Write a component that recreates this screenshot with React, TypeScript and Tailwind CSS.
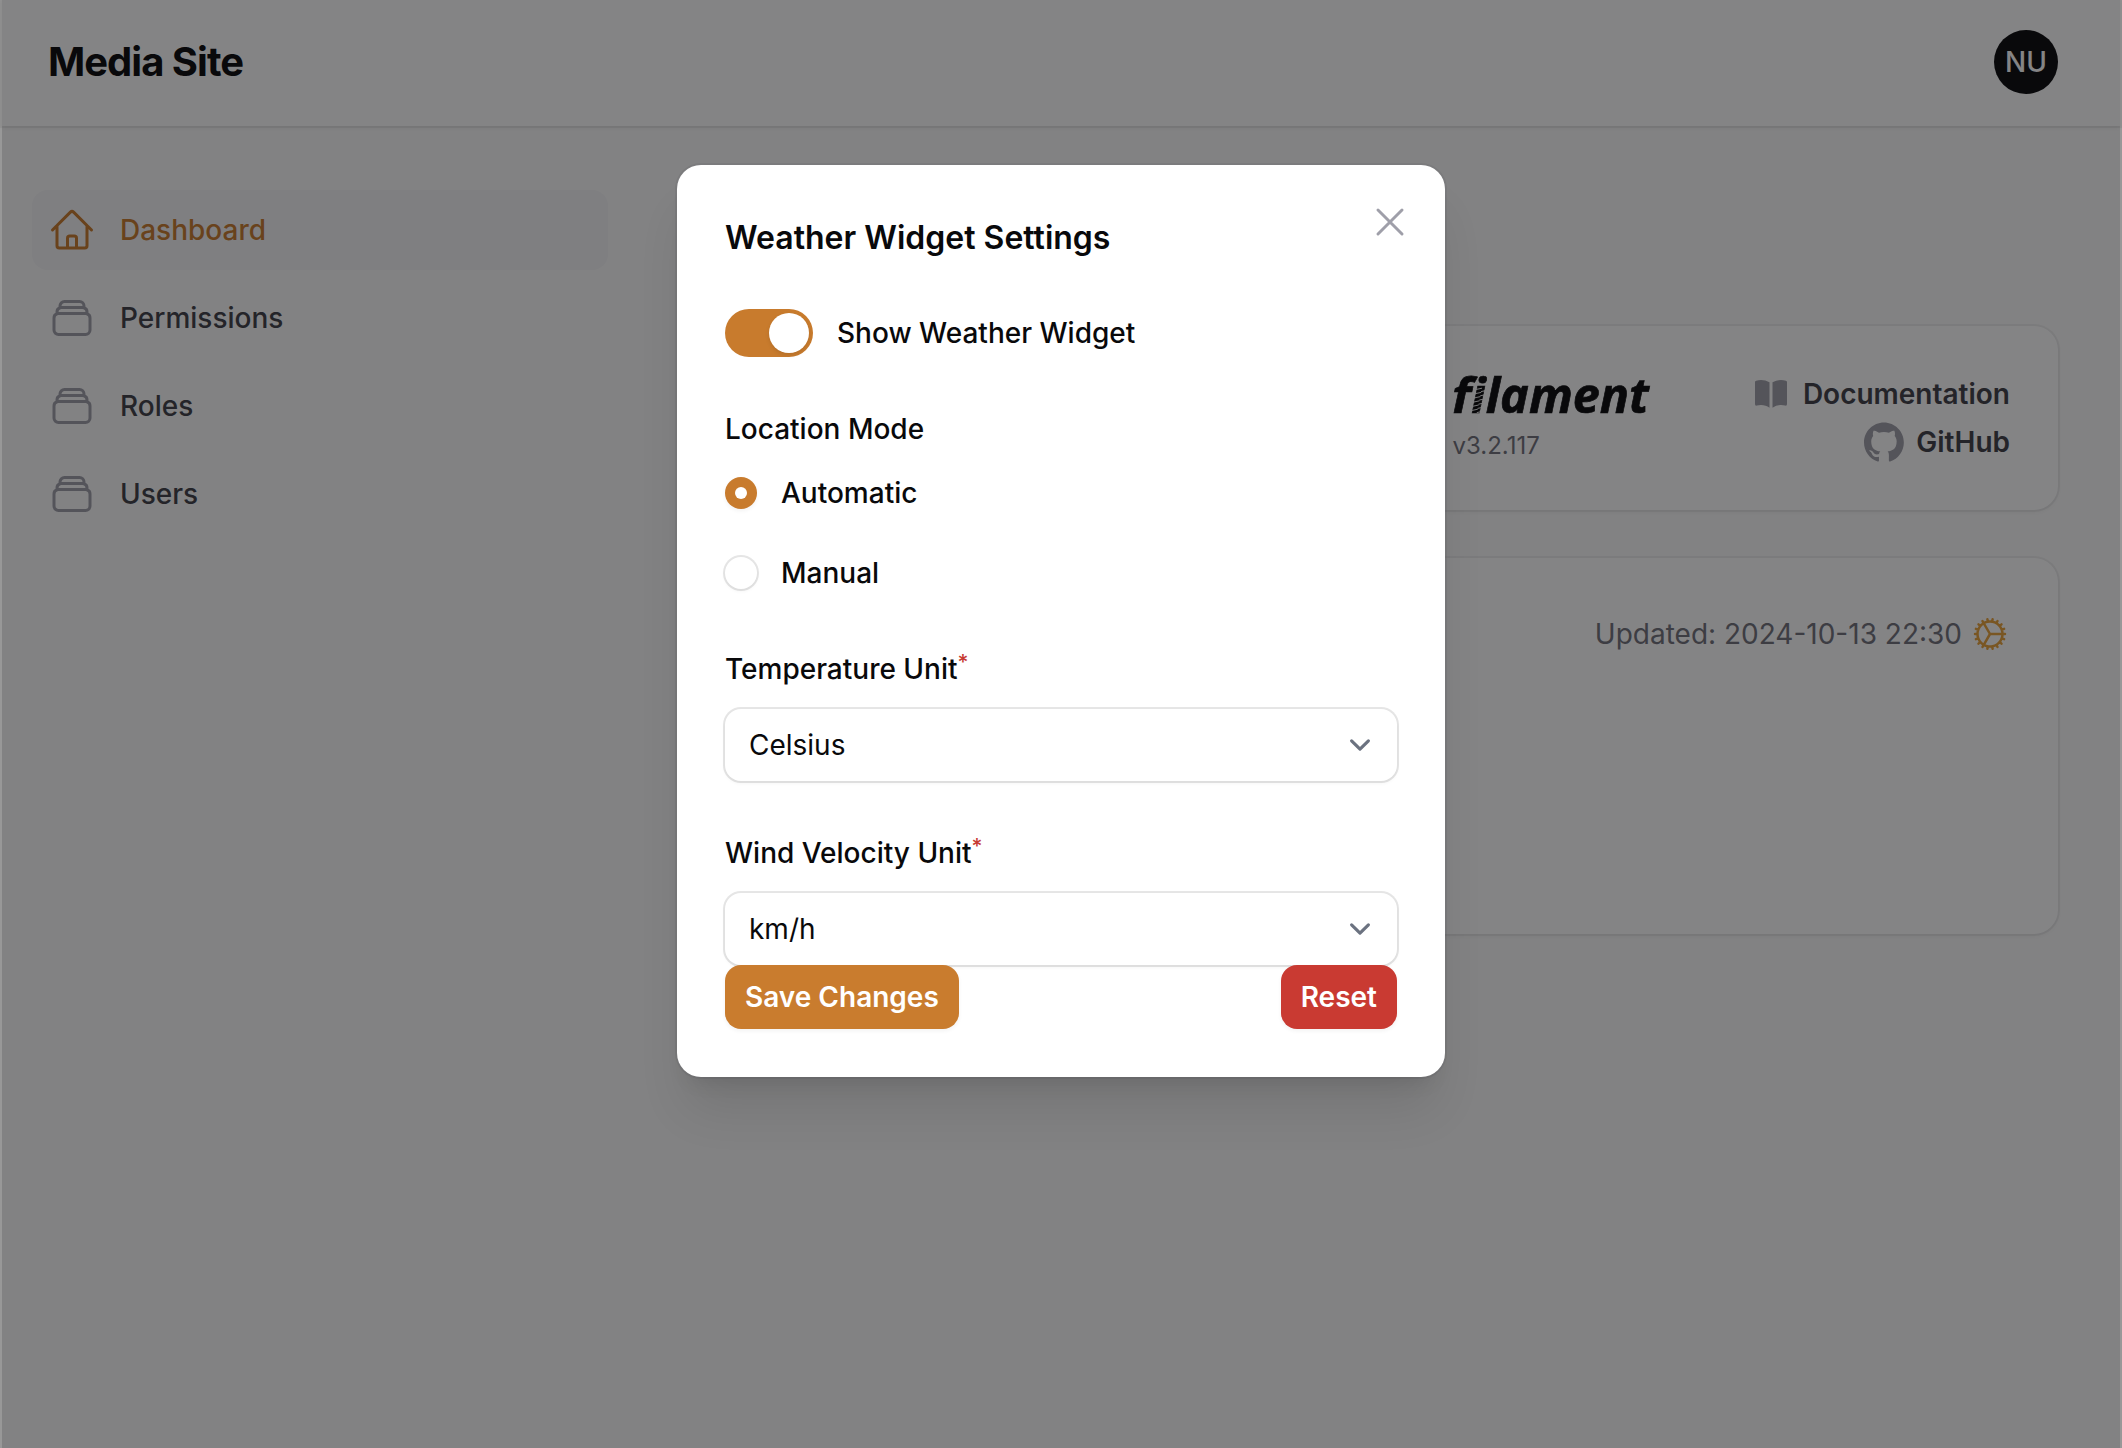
import {
  HiMiniBookOpen,
  HiOutlineCog,
  HiOutlineHome,
  HiOutlineRectangleStack,
  HiOutlineXMark,
} from "react-icons/hi2";

const navItems = [
  { label: "Dashboard", icon: HiOutlineHome, active: true },
  { label: "Permissions", icon: HiOutlineRectangleStack, active: false },
  { label: "Roles", icon: HiOutlineRectangleStack, active: false },
  { label: "Users", icon: HiOutlineRectangleStack, active: false },
];

function Header() {
  return (
    <header className="flex h-[126px] shrink-0 items-center justify-between bg-white pr-[62px] pb-0.5 pl-[46px] shadow-[0_0_0_2px_rgba(9,9,11,0.06),0_2px_4px_rgba(0,0,0,0.05)]">
      <div className="text-[40px] leading-10 font-bold tracking-tight text-zinc-950">Media Site</div>
      <div className="flex size-16 items-center justify-center rounded-full bg-zinc-950 text-[28px] font-medium text-white">
        NU
      </div>
    </header>
  );
}

function Sidebar() {
  return (
    <nav className="flex w-[640px] shrink-0 flex-col gap-2 pt-16 pr-[34px] pl-[30px]">
      {navItems.map(({ label, icon: Icon, active }) => (
        <a
          key={label}
          className={
            active
              ? "flex h-20 items-center gap-6 rounded-2xl bg-[#f4f4f6] px-4 text-[#c87b2d]"
              : "flex h-20 items-center gap-6 rounded-2xl px-4 text-zinc-700"
          }
        >
          <Icon className={active ? "size-12" : "size-12 text-zinc-400"} />
          <span className="text-[28px] leading-10 font-medium">{label}</span>
        </a>
      ))}
    </nav>
  );
}

// Notches cut alternately into both sides of the "i" stem, turning it into a coil.
const coilCuts = [0, 1, 2, 3, 4, 5]
  .map((k) => {
    const y = 14.4 + k * 4.2;
    const left = 1.15 + (5.2 * (38.6 - y)) / 25.7;
    return `M${left - 1.5} ${y + 1.2}L${left + 5} ${y - 0.2}M${left + 10.5} ${y + 1.8}L${left + 4} ${y + 3.2}`;
  })
  .join("");

function Wordmark() {
  return (
    <div className="-ml-px h-10 font-['Open_Sans'] text-[48.5px] leading-10 font-bold whitespace-nowrap text-zinc-950 italic [-webkit-text-stroke:0.7px_#09090b]">
      <span className="inline-block -skew-x-12 not-italic">f</span>
      <span className="relative inline-block leading-10">
        i
        <svg
          className="absolute top-0 left-0 h-10 w-[18px] overflow-visible"
          viewBox="0 0 18 40"
          fill="none"
        >
          <path d={coilCuts} stroke="#ffffff" strokeWidth="0.9" />
        </svg>
      </span>
      lament
    </div>
  );
}

function GitHubMark() {
  return (
    <svg viewBox="0 0 98 96" className="size-10 text-zinc-400" fill="currentColor">
      <path
        fillRule="evenodd"
        clipRule="evenodd"
        d="M48.854 0C21.839 0 0 22 0 49.217c0 21.756 13.993 40.172 33.405 46.69 2.427.49 3.316-1.059 3.316-2.362 0-1.141-.08-5.052-.08-9.127-13.59 2.934-16.42-5.867-16.42-5.867-2.184-5.704-5.42-7.17-5.42-7.17-4.448-3.015.324-3.015.324-3.015 4.934.326 7.523 5.052 7.523 5.052 4.367 7.496 11.404 5.378 14.235 4.074.404-3.178 1.699-5.378 3.074-6.6-10.839-1.141-22.243-5.378-22.243-24.283 0-5.378 1.94-9.778 5.014-13.2-.485-1.222-2.184-6.275.486-13.038 0 0 4.125-1.304 13.426 5.052a46.97 46.97 0 0 1 12.214-1.63c4.125 0 8.33.571 12.213 1.63 9.302-6.356 13.427-5.052 13.427-5.052 2.67 6.763.97 11.816.485 13.038 3.155 3.422 5.015 7.822 5.015 13.2 0 18.905-11.404 23.06-22.324 24.283 1.78 1.548 3.316 4.481 3.316 9.126 0 6.6-.08 11.897-.08 13.526 0 1.304.89 2.853 3.316 2.364 19.412-6.52 33.405-24.935 33.405-46.691C97.707 22 75.788 0 48.854 0z"
      />
    </svg>
  );
}

const cardClass =
  "rounded-3xl bg-white shadow-[0_0_0_2px_rgba(9,9,11,0.05),0_2px_4px_rgba(0,0,0,0.05)]";

function Dashboard() {
  return (
    <main className="flex flex-1 flex-col gap-12 pt-[200px] pr-[62px] pl-[63px]">
      <div className="grid grid-cols-2 gap-12">
        <section className={cardClass} />
        <section className={cardClass}>
          <div className="flex h-[184px] items-center justify-between px-12">
            <div className="flex flex-col gap-4">
              <Wordmark />
              <span className="-ml-px text-2xl leading-8 text-zinc-500">v3.2.117</span>
            </div>
            <div className="flex flex-col items-end gap-2 text-[28px] leading-10 font-semibold text-zinc-700">
              <a className="flex items-center gap-3">
                <HiMiniBookOpen className="size-10 text-zinc-400" />
                Documentation
              </a>
              <a className="flex items-center gap-3">
                <GitHubMark />
                GitHub
              </a>
            </div>
          </div>
        </section>
      </div>
      <section className={cardClass}>
        <div className="flex h-[376px] items-start justify-end gap-2 px-12 pt-14 text-[28px] leading-10 text-zinc-500">
          <span>Updated: 2024-10-13 22:30</span>
          <HiOutlineCog className="size-10 text-[#e9a23b]" />
        </div>
      </section>
    </main>
  );
}

function Radio({ label, checked }: { label: string; checked?: boolean }) {
  return (
    <label className="flex h-12 items-center gap-6">
      {checked ? (
        <span className="flex size-8 items-center justify-center rounded-full bg-[#c87b2d] shadow-[0_2px_4px_rgba(0,0,0,0.05)]">
          <span className="size-3 rounded-full bg-white" />
        </span>
      ) : (
        <span className="size-8 rounded-full bg-white shadow-[0_0_0_2px_rgba(9,9,11,0.1),0_2px_4px_rgba(0,0,0,0.05)]" />
      )}
      <span>{label}</span>
    </label>
  );
}

function SelectField({ label, value }: { label: string; value: string }) {
  return (
    <div className="flex flex-col gap-4">
      <div className="flex h-12 items-center leading-12">
        <span>{label}</span>
        <span className="-mt-3 text-[21px] text-[#c73a32]">*</span>
      </div>
      <div className="flex h-[72px] items-center justify-between rounded-2xl bg-white pr-4 pl-6 font-normal shadow-[0_0_0_2px_rgba(9,9,11,0.1),0_2px_4px_rgba(0,0,0,0.05)]">
        <span>{value}</span>
        <svg viewBox="0 0 20 20" className="size-[42px]" fill="none">
          <path
            d="M6 8l4 4 4-4"
            stroke="#6b7280"
            strokeWidth="1.5"
            strokeLinecap="round"
            strokeLinejoin="round"
          />
        </svg>
      </div>
    </div>
  );
}

function SettingsModal() {
  return (
    <div className="relative flex w-[768px] flex-col rounded-3xl bg-white p-12 text-[28px] font-medium text-zinc-950 shadow-[0_0_0_2px_rgba(9,9,11,0.05),0_40px_50px_-10px_rgba(0,0,0,0.1),0_16px_20px_-12px_rgba(0,0,0,0.1)]">
      <HiOutlineXMark className="absolute top-[33px] right-[31px] size-12 text-zinc-400" />
      <h2 className="pt-px text-[32px] leading-12 font-semibold">Weather Widget Settings</h2>
      <div className="mt-[47px] flex flex-col gap-12">
        <label className="flex h-12 items-center gap-6">
          <span className="flex h-12 w-22 items-center justify-end rounded-full bg-[#c87b2d] p-1">
            <span className="size-10 rounded-full bg-white shadow-[0_2px_4px_rgba(0,0,0,0.1)]" />
          </span>
          <span>Show Weather Widget</span>
        </label>
        <div className="flex flex-col gap-4">
          <div className="leading-12">Location Mode</div>
          <div className="flex flex-col gap-8">
            <Radio label="Automatic" checked />
            <Radio label="Manual" />
          </div>
        </div>
        <SelectField label="Temperature Unit" value="Celsius" />
        <SelectField label="Wind Velocity Unit" value="km/h" />
      </div>
      <div className="relative flex justify-between font-semibold text-white">
        <button className="h-16 rounded-2xl bg-[#c97c2e] px-5 shadow-[0_2px_4px_rgba(0,0,0,0.05)]">
          Save Changes
        </button>
        <button className="h-16 rounded-2xl bg-[#c93a32] px-5 shadow-[0_2px_4px_rgba(0,0,0,0.05)]">
          Reset
        </button>
      </div>
    </div>
  );
}

export default function App() {
  return (
    <div className="relative h-[1448px] w-full overflow-hidden bg-[#989898] px-0.5 font-['Inter',sans-serif]">
      <div className="flex h-full flex-col bg-[#fafafa]">
        <Header />
        <div className="flex flex-1">
          <Sidebar />
          <Dashboard />
        </div>
      </div>
      <div className="absolute inset-x-0.5 inset-y-0 flex items-start justify-center bg-zinc-950/50 pt-[165px]">
        <SettingsModal />
      </div>
    </div>
  );
}
